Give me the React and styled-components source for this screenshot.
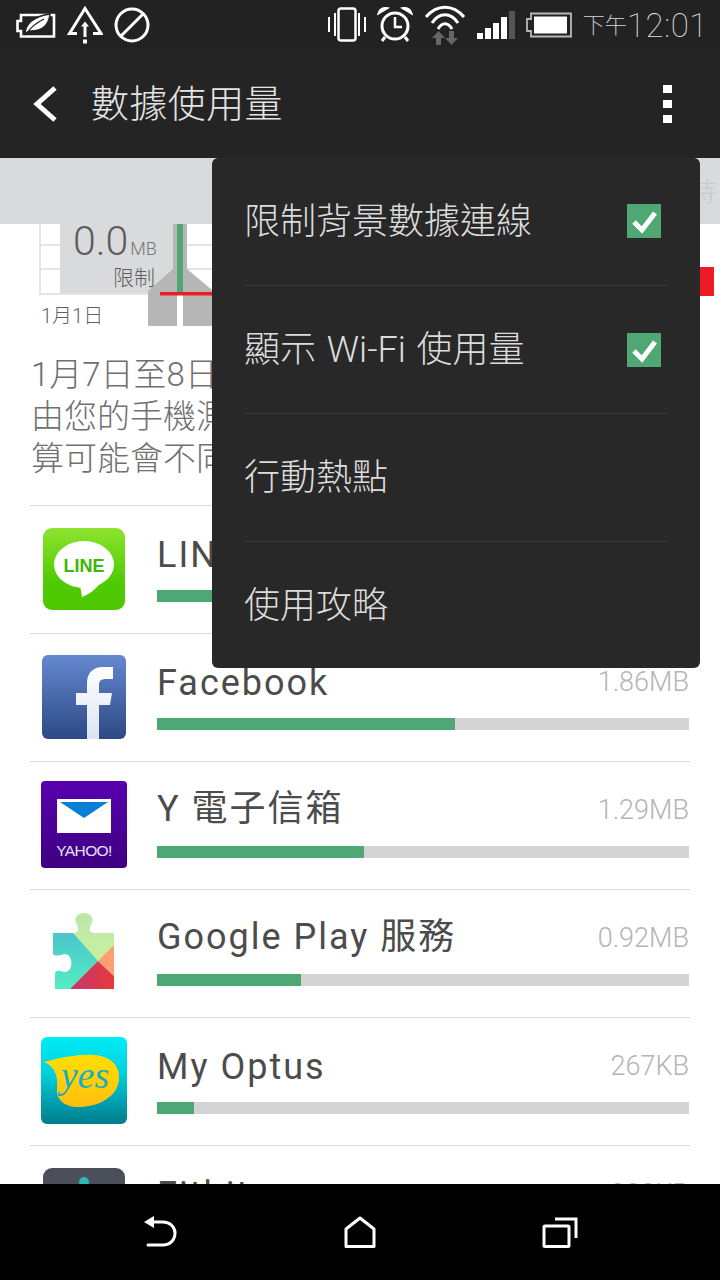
import React from 'react';
import styled, { createGlobalStyle } from 'styled-components';

const Global = createGlobalStyle`
  html, body { margin: 0; padding: 0; background: #fff; }
  * { box-sizing: border-box; }
`;

const sans = `Roboto, "Noto Sans CJK TC", sans-serif`;

const Phone = styled.div`
  position: relative;
  width: 720px;
  height: 1280px;
  display: flex;
  flex-direction: column;
  overflow: hidden;
  background: #fff;
  font-family: ${sans};
`;

const StatusBar = styled.div`
  flex: 0 0 50px;
  display: flex;
  align-items: center;
  justify-content: space-between;
  padding: 0 12px 0 16px;
  background: #222222;
`;

const IconGroup = styled.div`
  display: flex;
  align-items: center;
  gap: ${(p) => p.$gap || 10}px;
`;

const Clock = styled.div`
  display: flex;
  align-items: center;
  color: #e2e2e2;
`;

const ClockPrefix = styled.span`
  line-height: 1;
  margin-top: 2px;
  font-size: 22px;
  font-weight: 300;
  color: #bcbcbc;
`;

const ClockTime = styled.span`
  line-height: 1;
  font-size: 33px;
  font-weight: 100;
  letter-spacing: 0.6px;
`;

const ActionBar = styled.div`
  flex: 0 0 108px;
  display: flex;
  align-items: center;
  padding: 0 48px 0 33px;
  background: #242424;
`;

const Title = styled.div`
  flex: 1;
  margin: 0 0 8px 34px;
  font-size: 38px;
  letter-spacing: 0.4px;
  font-weight: 300;
  color: #e4e4e4;
`;

const Overflow = styled.div`
  display: flex;
  flex-direction: column;
  gap: 7px;
`;

const Dot = styled.span`
  width: 9px;
  height: 8px;
  background: #fff;
`;

const Strip = styled.div`
  flex: 0 0 66px;
  display: flex;
  align-items: center;
  justify-content: flex-end;
  overflow: hidden;
  padding: 0 4px 4px 0;
  background: #d9dadb;
  font-size: 26px;
  font-weight: 300;
  color: #c8c9ca;
`;

const Main = styled.div`
  flex: 1;
  min-height: 0;
  overflow: hidden;
`;

const Chart = styled.div`
  position: relative;
  height: 104px;
`;

const ChartArt = styled.svg`
  display: block;
`;

const ChartValue = styled.div`
  position: absolute;
  left: 73px;
  top: -7px;
  display: flex;
  align-items: baseline;
  font-size: 41px;
  font-weight: 300;
  color: #5c5c5c;
`;

const ChartUnit = styled.span`
  margin-left: 2px;
  font-size: 18px;
  color: #777;
`;

const ChartLabel = styled.div`
  position: absolute;
  left: ${(p) => p.$left}px;
  top: ${(p) => p.$top}px;
  font-size: ${(p) => p.$size}px;
  line-height: 1.2;
  font-weight: 300;
  color: #5f5f5f;
`;

const Summary = styled.div`
  padding: 26px 0 25px 31px;
  font-size: 33px;
  line-height: 42px;
  font-weight: 300;
  color: #707070;
  white-space: nowrap;
`;

const List = styled.div`
  margin: 0 30px;
`;

const Row = styled.div`
  display: flex;
  height: 128px;
  border-top: 1px solid #dcdcdc;
`;

const AppIcon = styled.svg`
  flex: 0 0 88px;
  margin: 19px 29px 0 10px;
`;

const RowBody = styled.div`
  flex: 1;
  padding: 21px 1px 0 0;
`;

const RowHead = styled.div`
  display: flex;
  align-items: center;
  justify-content: space-between;
  height: 56px;
`;

const AppName = styled.span`
  margin-bottom: ${(p) => (p.$raised ? 5 : 0)}px;
  font-size: 36px;
  line-height: 44px;
  letter-spacing: 2px;
  color: #4c4c4c;
`;

const AppSize = styled.span`
  margin-bottom: 3px;
  font-size: 27px;
  line-height: 32px;
  font-weight: 300;
  color: #b4b4b4;
`;

const Track = styled.div`
  height: 12px;
  margin-top: 7px;
  background: #d4d4d4;
`;

const Fill = styled.div`
  height: 100%;
  background: #4fa873;
`;

const NavBar = styled.div`
  flex: 0 0 96px;
  display: grid;
  grid-template-columns: repeat(3, 1fr);
  align-items: center;
  justify-items: center;
  padding: 0 60px;
  background: #000;
`;

const Menu = styled.div`
  position: absolute;
  left: 212px;
  top: 158px;
  width: 488px;
  height: 510px;
  padding: 0 33px;
  border-radius: 6px;
  background: #282828;
`;

const MenuItem = styled.div`
  display: flex;
  align-items: center;
  justify-content: space-between;
  height: 128px;
  padding-right: 6px;
  border-top: ${(p) => (p.$first ? 'none' : '1px solid #3a3a3a')};
  margin-top: ${(p) => (p.$first ? '-1px' : '0')};
  font-size: 36px;
  font-weight: 300;
  word-spacing: 2px;
  color: #dcdcdc;
`;

const MenuLabel = styled.span`
  margin: 0 0 7px -1px;
`;

const Check = styled.svg`
  display: block;
`;

const LeafBattery = () => (
  <svg width="40" height="26" viewBox="0 0 40 26">
    <path d="M5 3H38V24.500H5V19H1.500V9H5Z" fill="none" stroke="#fff" strokeWidth="2.600" />
    <path d="M9 22C9 12 18 4 34 2C33 12 27 19 15 19C13 19 11 20 9 22Z" fill="#fff" stroke="#222" strokeWidth="1.500" />
    <path d="M11 21C15 15 20 11 28 7" fill="none" stroke="#222" strokeWidth="1.200" />
  </svg>
);

const WarnArrow = () => (
  <svg width="36" height="38" viewBox="0 0 36 38">
    <path d="M18 2.500L34 27.500H2.500Z" fill="none" stroke="#fff" strokeWidth="3" />
    <rect x="10" y="24" width="16" height="6" fill="#222" />
    <path d="M18 12L25 21H21V32H15V21H11Z" fill="#222" />
    <path d="M18 15.500L22 20.500H19.500V31H16.500V20.500H14Z" fill="#fff" />
    <rect x="16" y="33.500" width="4" height="4" fill="#fff" />
  </svg>
);

const NoSign = () => (
  <svg width="36" height="36" viewBox="0 0 36 36">
    <circle cx="18" cy="18" r="16" fill="none" stroke="#fff" strokeWidth="3" />
    <path d="M6.500 29.500L29.500 6.500" stroke="#fff" strokeWidth="3" />
  </svg>
);

const Vibrate = () => (
  <svg width="38" height="36" viewBox="0 0 38 36">
    <rect x="10.500" y="1.500" width="17" height="32" rx="2.500" fill="none" stroke="#fff" strokeWidth="2.500" />
    <path d="M1 10V25M7 6V29M31 6V29M37 10V25" stroke="#fff" strokeWidth="2" fill="none" />
  </svg>
);

const Alarm = () => (
  <svg width="36" height="38" viewBox="0 0 36 38">
    <circle cx="18" cy="20" r="13" fill="none" stroke="#fff" strokeWidth="3" />
    <path d="M18 11V21H25" fill="none" stroke="#fff" strokeWidth="2.500" />
    <path d="M1 8C2 3 6 1 11 2ZM35 8C34 3 30 1 25 2Z" fill="#fff" stroke="#fff" strokeWidth="1.500" />
    <path d="M8 31L5 35M28 31L31 35" stroke="#fff" strokeWidth="3" />
  </svg>
);

const Wifi = () => (
  <svg width="42" height="40" viewBox="0 0 42 40">
    <path d="M2 12C13 -1 29 -1 40 12M8 18C15 7 27 7 34 18M14 24C18 17 24 17 28 24" fill="none" stroke="#fff" strokeWidth="3" />
    <path d="M14.500 26L21 33H17V40H12V33H8ZM27.500 40L21 33H25V26H30V33H34Z" fill="#666" />
  </svg>
);

const Signal = () => (
  <svg width="38" height="30" viewBox="0 0 38 30">
    <rect x="0" y="23" width="6" height="6" fill="#fff" />
    <rect x="8" y="18" width="6" height="11" fill="#fff" />
    <rect x="16" y="13" width="6" height="16" fill="#fff" />
    <rect x="24" y="7" width="6" height="22" fill="#fff" />
    <rect x="32" y="1" width="6" height="28" fill="#555" />
  </svg>
);

const Battery = () => (
  <svg width="46" height="26" viewBox="0 0 46 26">
    <path d="M5 1.500H45V24.500H5V19H1V7H5Z" fill="none" stroke="#b9b9b9" strokeWidth="1.800" />
    <rect x="8" y="4.500" width="33" height="17" fill="#fff" />
  </svg>
);

const LineIcon = () => (
  <AppIcon width="88" height="88" viewBox="0 0 88 88">
    <defs>
      <linearGradient id="lineBg" x1="0" y1="0" x2="0" y2="1">
        <stop offset="0" stopColor="#8ee32f" />
        <stop offset="0.65" stopColor="#50cb03" />
        <stop offset="1" stopColor="#4cc800" />
      </linearGradient>
    </defs>
    <rect x="3" y="3" width="82" height="82" rx="9" fill="url(#lineBg)" />
    <ellipse cx="44" cy="39.500" rx="30" ry="23.500" fill="#fff" />
    <path d="M40 60L42 72C50 69 56 64 62 56Z" fill="#fff" />
    <text x="44" y="46.500" textAnchor="middle" fontFamily="Liberation Sans" fontWeight="700" fontSize="18" fill="#3db700">LINE</text>
  </AppIcon>
);

const FacebookIcon = () => (
  <AppIcon width="88" height="88" viewBox="0 0 88 88">
    <defs>
      <linearGradient id="fbBg" x1="0" y1="0" x2="0" y2="1">
        <stop offset="0" stopColor="#6588d0" />
        <stop offset="1" stopColor="#2c4984" />
      </linearGradient>
      <linearGradient id="fbF" x1="0" y1="0" x2="0" y2="1">
        <stop offset="0" stopColor="#fff" />
        <stop offset="1" stopColor="#dbe3f3" />
      </linearGradient>
    </defs>
    <rect x="2" y="2" width="84" height="84" rx="6" fill="url(#fbBg)" />
    <path d="M47 86V52H36V40H47V30C47 20 53 14 63 14H73V26H66C61 26 59 28 59 32V40H72L70 52H59V86Z" fill="url(#fbF)" />
  </AppIcon>
);

const YahooIcon = () => (
  <AppIcon width="88" height="88" viewBox="0 0 88 88">
    <defs>
      <linearGradient id="yBg" x1="0" y1="0" x2="0" y2="1">
        <stop offset="0" stopColor="#5800ae" />
        <stop offset="1" stopColor="#3e0082" />
      </linearGradient>
    </defs>
    <rect x="1" y="0" width="86" height="87" rx="4" fill="url(#yBg)" />
    <rect x="17" y="18" width="54" height="34" fill="#fff" />
    <path d="M20 21H68L44 37Z" fill="#0a7fd6" />
    <text x="44" y="75" textAnchor="middle" fontFamily="Liberation Sans" fontSize="15.500" letterSpacing="-0.600" fill="#e8e0f4">YAHOO!</text>
  </AppIcon>
);

const PlayIcon = () => (
  <AppIcon width="88" height="88" viewBox="0 0 88 88">
    <defs>
      <clipPath id="piece">
        <path d="M13 24H33C39 24 39 20 37 16C33 9 37 4 44 4C51 4 55 9 51 16C49 20 49 24 55 24H74V80H15V66C15 60 20 62 24 63C34 64 34 44 24 45C20 46 13 48 13 44Z" />
      </clipPath>
      <linearGradient id="lime" x1="0" y1="0" x2="0" y2="1">
        <stop offset="0" stopColor="#b9e6a8" />
        <stop offset="1" stopColor="#d6f79a" />
      </linearGradient>
      <linearGradient id="teal" x1="0" y1="0" x2="0" y2="1">
        <stop offset="0" stopColor="#4cc4cc" />
        <stop offset="1" stopColor="#52eec4" />
      </linearGradient>
      <linearGradient id="rose" x1="0" y1="0" x2="1" y2="0">
        <stop offset="0" stopColor="#c2386f" />
        <stop offset="1" stopColor="#e8383c" />
      </linearGradient>
    </defs>
    <g clipPath="url(#piece)">
      <rect x="0" y="0" width="88" height="88" fill="url(#lime)" />
      <path d="M0 24H33L58 52L30 80H0Z" fill="url(#teal)" />
      <path d="M30 80L58 52L74 67V80Z" fill="url(#rose)" />
      <path d="M58 52L74 36V67Z" fill="#fba070" />
    </g>
  </AppIcon>
);

const OptusIcon = () => (
  <AppIcon width="88" height="88" viewBox="0 0 88 88">
    <defs>
      <linearGradient id="oBg" x1="0" y1="0" x2="0" y2="1">
        <stop offset="0" stopColor="#00ecf6" />
        <stop offset="0.4" stopColor="#00d2df" />
        <stop offset="1" stopColor="#007c8c" />
      </linearGradient>
      <linearGradient id="oBub" x1="0" y1="0" x2="0" y2="1">
        <stop offset="0" stopColor="#ffdf00" />
        <stop offset="1" stopColor="#ffbe10" />
      </linearGradient>
    </defs>
    <rect x="1" y="0" width="86" height="87" rx="6" fill="url(#oBg)" />
    <path d="M4 25C22 20 40 17 54 18C70 19 80 28 79 42C78 60 58 70 38 70C24 70 16 62 17 52C18 40 16 30 4 25Z" fill="url(#oBub)" />
    <text x="45" y="51" textAnchor="middle" fontFamily="Liberation Serif" fontStyle="italic" fontSize="38" fill="#17aec4">yes</text>
  </AppIcon>
);

const FitbitIcon = () => (
  <AppIcon width="88" height="88" viewBox="0 0 88 88">
    <rect x="3" y="3" width="82" height="82" rx="9" fill="#4a4f5a" />
    <circle cx="44" cy="17" r="5" fill="#30b6b8" />
  </AppIcon>
);

const apps = [
  { name: 'LINE', size: '2.47MB', pct: 100, Icon: LineIcon },
  { name: 'Facebook', size: '1.86MB', pct: 56, Icon: FacebookIcon },
  { name: 'Y 電子信箱', size: '1.29MB', pct: 39, Icon: YahooIcon, raised: true },
  { name: 'Google Play 服務', size: '0.92MB', pct: 27, Icon: PlayIcon, raised: true },
  { name: 'My Optus', size: '267KB', pct: 7, Icon: OptusIcon },
  { name: 'Fitbit', size: '200KB', pct: 5, Icon: FitbitIcon },
];

const menu = [
  { label: '限制背景數據連線', checked: true },
  { label: '顯示 Wi-Fi 使用量', checked: true },
  { label: '行動熱點' },
  { label: '使用攻略' },
];

export default function App() {
  return (
    <Phone>
      <Global />
      <StatusBar>
        <IconGroup $gap={11}>
          <LeafBattery />
          <WarnArrow />
          <NoSign />
        </IconGroup>
        <IconGroup $gap={11}>
          <Vibrate />
          <Alarm />
          <Wifi />
          <Signal />
          <Battery />
          <Clock>
            <ClockPrefix>下午</ClockPrefix>
            <ClockTime>12:01</ClockTime>
          </Clock>
        </IconGroup>
      </StatusBar>

      <ActionBar>
        <svg width="24" height="38" viewBox="0 0 24 38">
          <path d="M22 3L4 19L22 35" fill="none" stroke="#fff" strokeWidth="5" />
        </svg>
        <Title>數據使用量</Title>
        <Overflow>
          <Dot />
          <Dot />
          <Dot />
        </Overflow>
      </ActionBar>

      <Strip>持</Strip>

      <Main>
        <Chart>
          <ChartArt width="720" height="104" viewBox="0 0 720 104">
            <path d="M40 0V70H700M40 21H700M40 45H700" fill="none" stroke="#e4e4e4" strokeWidth="2" />
            <rect x="60" y="0" width="113" height="69" fill="#d9dadb" />
            <path d="M173 0H187V45L212 66V102H183V69H177V102H148V67L173 45Z" fill="#b6b6b6" />
            <rect x="177" y="0" width="6" height="69" fill="#4fa873" />
            <rect x="160" y="68" width="60" height="3.500" fill="#ed1c24" />
            <rect x="690" y="43" width="24" height="29" fill="#ed1c24" />
          </ChartArt>
          <ChartValue>
            0.0<ChartUnit>MB</ChartUnit>
          </ChartValue>
          <ChartLabel $left={113} $top={42} $size={21}>限制</ChartLabel>
          <ChartLabel $left={41} $top={80} $size={20}>1月1日</ChartLabel>
        </Chart>

        <Summary>
          1月7日至8日：約使用了 4.89MB
          <br />
          由您的手機測量，您的電信業者的計
          <br />
          算可能會不同。
        </Summary>

        <List>
          {apps.map(({ name, size, pct, Icon, raised }) => (
            <Row key={name}>
              <Icon />
              <RowBody>
                <RowHead>
                  <AppName $raised={raised}>{name}</AppName>
                  <AppSize>{size}</AppSize>
                </RowHead>
                <Track>
                  <Fill style={{ width: `${pct}%` }} />
                </Track>
              </RowBody>
            </Row>
          ))}
        </List>
      </Main>

      <NavBar>
        <svg width="36" height="34" viewBox="0 0 36 34">
          <path d="M2 7L12 1V13Z" fill="#fff" />
          <path d="M9 7H21C28 7 33 12 33 18C33 25 28 30 21 30H6" fill="none" stroke="#fff" strokeWidth="3" strokeLinecap="round" />
        </svg>
        <svg width="32" height="32" viewBox="0 0 32 32">
          <path d="M16 2L30 13V30.500H2V13Z" fill="none" stroke="#fff" strokeWidth="3" strokeLinejoin="round" />
        </svg>
        <svg width="36" height="32" viewBox="0 0 36 32">
          <rect x="2" y="10" width="25" height="20.500" rx="1" fill="none" stroke="#fff" strokeWidth="3" />
          <path d="M13 3H34V22" fill="none" stroke="#fff" strokeWidth="3" />
        </svg>
      </NavBar>

      <Menu>
        {menu.map((item, i) => (
          <MenuItem key={item.label} $first={i === 0}>
            <MenuLabel>{item.label}</MenuLabel>
            {item.checked && (
              <Check width="34" height="34" viewBox="0 0 34 34">
                <rect width="34" height="34" fill="#4fa873" />
                <path d="M7 18L15 26L28 9" fill="none" stroke="#fff" strokeWidth="5" />
              </Check>
            )}
          </MenuItem>
        ))}
      </Menu>
    </Phone>
  );
}
